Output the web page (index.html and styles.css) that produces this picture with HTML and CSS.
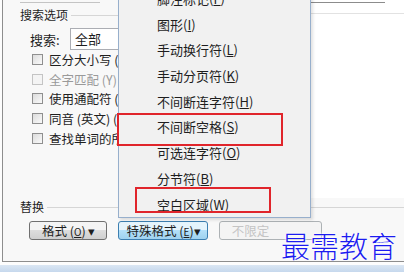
FILE: index.html
```html
<!DOCTYPE html>
<html lang="zh-CN">
<head>
    <meta charset="UTF-8">
    <title>查找和替换</title>
    <link rel="stylesheet" href="styles.css">
</head>
<body>
    <div class="dialog">
        <div class="main">
            <div class="left">
                <div class="top-rule"></div>
                <div class="legend"><span>搜索选项</span><i></i></div>
                <div class="search-row">
                    <span class="label">搜索<u>:</u></span>
                    <div class="select">全部</div>
                </div>
                <div class="check"><span class="box"></span>区分大小写 (H)</div>
                <div class="check disabled"><span class="box"></span>全字匹配 (Y)</div>
                <div class="check"><span class="box"></span>使用通配符 (U)</div>
                <div class="check"><span class="box"></span>同音 (英文) (K)</div>
                <div class="check"><span class="box"></span>查找单词的所有形式</div>
            </div>
            <div class="side">
                <div class="side-head"></div>
            </div>
        </div>

        <div class="legend replace"><span>替换</span><i></i></div>
        <div class="buttons">
            <div class="btn">格式 (<u>O</u>) ▾</div>
            <div class="btn active">特殊格式 (<u>E</u>)▾</div>
            <div class="btn off">不限定</div>
        </div>

        <ul class="menu">
            <li>脚注标记(<u>F</u>)</li>
            <li>图形(<u>I</u>)</li>
            <li>手动换行符(<u>L</u>)</li>
            <li>手动分页符(<u>K</u>)</li>
            <li>不间断连字符(<u>H</u>)</li>
            <li>不间断空格(<u>S</u>)</li>
            <li>可选连字符(<u>O</u>)</li>
            <li>分节符(<u>B</u>)</li>
            <li>空白区域(<u>W</u>)</li>
        </ul>

        <div class="mark mark-1"></div>
        <div class="mark mark-2"></div>

        <div class="watermark">最需教育</div>
    </div>
    <div class="taskbar"></div>
</body>
</html>
```

FILE: styles.css
```css
body {
    margin: 0;
    width: 404px;
    height: 272px;
    overflow: hidden;
    background: #fdfdfd;
    font-family: "Noto Sans CJK SC", "Microsoft YaHei", sans-serif;
    font-size: 13px;
    color: #1e1e1e;
}
.dialog {
    position: relative;
    margin-left: 2px;
    height: 261px;
    border-left: 1px solid #8e8e8e;
    border-bottom: 1px solid #8e8e8e;
    background: #f8f8f8;
    overflow: hidden;
}
.taskbar {
    margin-top: 3px;
    height: 8px;
    background: linear-gradient(#dbe7f4, #c3d6ec);
}
.main {
    display: grid;
    grid-template-columns: 307px 1fr;
    height: 198px;
}
.left {
    padding-left: 17px;
}
.top-rule {
    margin-top: 2px;
    width: 80px;
    border-top: 1px solid #c4c4c4;
}
.legend {
    display: flex;
    align-items: center;
    height: 16px;
    margin-top: 4px;
    font-size: 12px;
    line-height: 16px;
}
.legend i {
    flex: 1;
    margin-left: 3px;
    border-top: 1px solid #d6d6d6;
}
.search-row {
    display: flex;
    align-items: center;
    margin-top: 5px;
    margin-left: 10px;
    height: 22px;
}
.label {
    width: 40px;
}
.label u {
    text-decoration: none;
}
.select {
    flex: 1;
    height: 20px;
    line-height: 20px;
    padding-left: 4px;
    border: 1px solid #abadb3;
    background: #fff;
}
.check {
    display: flex;
    align-items: center;
    height: 19.6px;
    margin-left: 12px;
    white-space: nowrap;
    font-size: 12.5px;
}
.check.disabled {
    color: #9a9a9a;
}
.box {
    width: 9px;
    height: 9px;
    margin-right: 6px;
    border: 1px solid #8f8f8f;
    background: linear-gradient(135deg, #dcdcdc, #fafafa);
}
.disabled .box {
    border-color: #c4c4c4;
    background: #f4f4f4;
}
.side {
    background: #fff;
}
.side-head {
    margin-top: 2px;
    height: 11px;
    border-bottom: 1px solid #e2e2e2;
    background: linear-gradient(to right, #8c8c8c 75px, transparent 75px) top / 100% 1px no-repeat;
}
.replace {
    margin-top: 1px;
    margin-left: 17px;
}
.buttons {
    display: flex;
    gap: 11px;
    margin-top: 6px;
    margin-left: 26px;
}
.btn {
    height: 17px;
    line-height: 17px;
    padding: 0 11px 0 12px;
    border: 1px solid #707070;
    border-radius: 3px;
    background: linear-gradient(#f4f4f4 50%, #dddddd 50%, #cfcfcf);
    font-size: 12.5px;
    white-space: nowrap;
}
.btn u {
    font-size: 10px;
}
.btn.active {
    padding: 0 6px 0 7px;
    border-color: #3c7fb1;
    background: linear-gradient(#e5f4fc 45%, #b3e0f9 50%, #9fd2ef);
}
.btn.off {
    width: 78px;
    border-color: #adb2b5;
    background: #f4f4f4;
    color: #c4c4c4;
}
.menu {
    position: absolute;
    left: 115px;
    top: -14px;
    width: 191px;
    margin: 0;
    padding: 0;
    list-style: none;
    border: 1px solid #97afcc;
    border-top: none;
    background: #f1f1f1;
    box-shadow: 2px 2px 3px rgba(0, 0, 0, 0.12);
}
.menu li {
    height: 25.7px;
    line-height: 25.7px;
    padding-left: 38px;
    font-size: 13px;
}
.mark {
    position: absolute;
    border: 2px solid #e0252b;
}
.mark-1 {
    left: 114px;
    top: 113px;
    width: 162px;
    height: 29px;
}
.mark-2 {
    left: 132px;
    top: 187px;
    width: 132px;
    height: 22px;
}
.watermark {
    position: absolute;
    left: 278px;
    top: 227px;
    font-size: 29px;
    font-weight: 300;
    line-height: 36px;
    color: #1c1cf0;
    text-shadow: 0 0 2px #fff, 0 0 3px #fff;
}
```
